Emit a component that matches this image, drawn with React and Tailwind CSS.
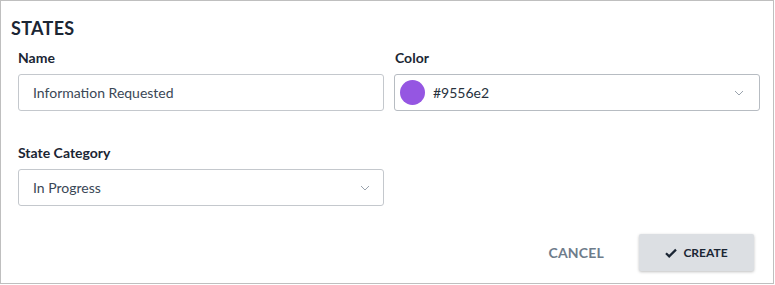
import React from "react";

const Chevron = () => (
  <svg width="10" height="6" viewBox="0 0 10 6" fill="none">
    <path d="M1 1l4 4 4-4" stroke="#9aa3ad" strokeWidth="1" />
  </svg>
);

const App = () => {
  return (
    <div className="w-[775px] h-[285px] bg-white font-['Lato',sans-serif]">
      <div className="w-[774px] h-[284px] border border-[#bfbfbf] relative">
        <h1 className="absolute left-[10px] top-[15px] text-[18px] font-bold text-[#1b2634] leading-[24px] tracking-[0.3px]">
          STATES
        </h1>
        <div className="pt-[47px] pl-[17px] flex gap-[10px]">
          <div className="w-[366px] shrink-0">
            <label className="block text-[14px] font-bold text-[#1b2634] leading-[20px] h-[26px]">
              Name
            </label>
            <div className="h-[37px] border border-[#c4c8cd] rounded-[3px] flex items-center pl-[14px] text-[14px] text-[#3a4756]">
              Information Requested
            </div>
          </div>
          <div className="w-[366px] shrink-0">
            <label className="block text-[14px] font-bold text-[#1b2634] leading-[20px] h-[26px] pl-[1px]">
              Color
            </label>
            <div className="h-[37px] border border-[#b7bcc2] rounded-[3px] flex items-center pl-[5px] pr-[15px]">
              <span className="w-[25px] h-[25px] rounded-full bg-[#9556e2]"></span>
              <span className="ml-[8px] text-[14px] text-[#26313d] flex-1">#9556e2</span>
              <Chevron />
            </div>
          </div>
        </div>
        <div className="pt-[32px] pl-[17px]">
          <div className="w-[366px]">
            <label className="block text-[14px] font-bold text-[#1b2634] leading-[20px] h-[26px]">
              State Category
            </label>
            <div className="h-[37px] border border-[#c4c8cd] rounded-[3px] flex items-center pl-[14px] pr-[13px] text-[14px] text-[#3a4756]">
              <span className="flex-1">In Progress</span>
              <Chevron />
            </div>
          </div>
        </div>
        <div className="flex justify-end items-center pt-[28px] pr-[19px]">
          <button className="text-[14px] font-bold text-[#6e7c8b] tracking-[0.2px] mr-[35px]">
            CANCEL
          </button>
          <button className="w-[115px] h-[37px] bg-[#dcdfe3] rounded-[2px] shadow-[0_1px_3px_rgba(0,0,0,0.25)] flex items-center justify-center gap-[6px] text-[12px] font-bold text-[#1b2634]">
            <svg width="12" height="10" viewBox="0 0 12 10">
              <path d="M1 5.2l3.2 3.2L11 1.6" stroke="#1b2634" strokeWidth="2.2" fill="none" />
            </svg>
            CREATE
          </button>
        </div>
      </div>
    </div>
  );
};

export default App;
